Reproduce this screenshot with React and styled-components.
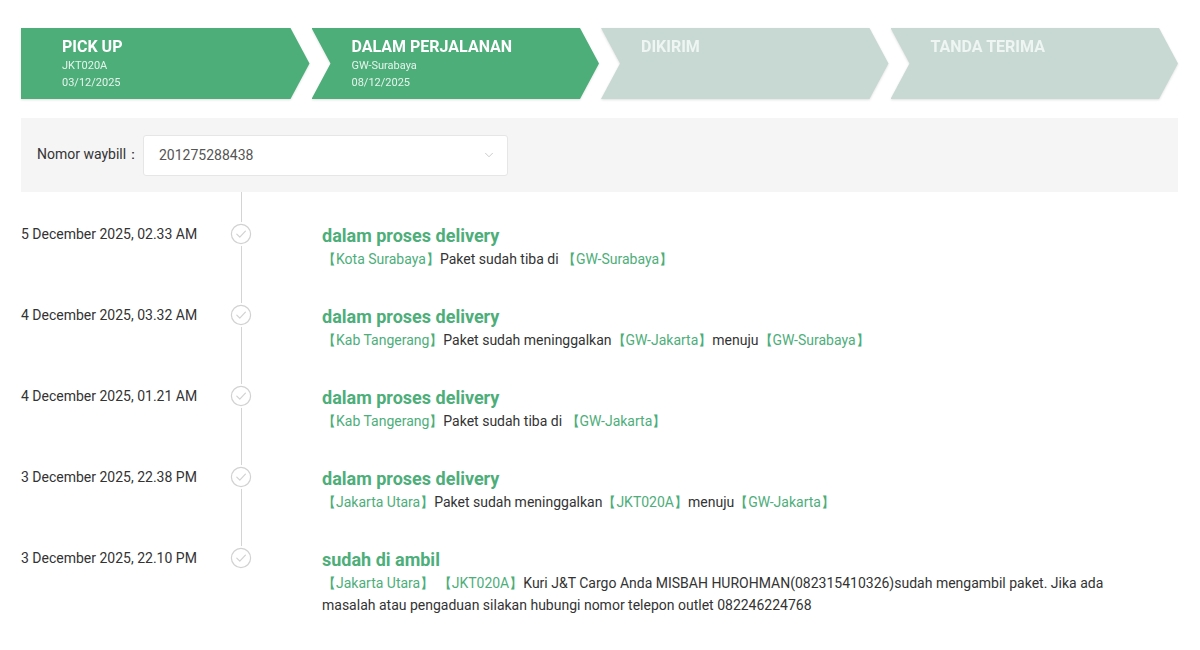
import React from 'react'
import styled, { createGlobalStyle } from 'styled-components'
import { ChevronDown } from 'lucide-react'

const GlobalStyle = createGlobalStyle`
  body {
    margin: 0;
    background: #fff;
    font-family: Roboto, "Liberation Sans", Arial, sans-serif;
    color: #333;
  }
`

const GREEN = '#4dae7a'

const steps = [
  { title: 'PICK UP', lines: ['JKT020A', '03/12/2025'], done: true },
  { title: 'DALAM PERJALANAN', lines: ['GW-Surabaya', '08/12/2025'], done: true },
  { title: 'DIKIRIM', lines: [], done: false },
  { title: 'TANDA TERIMA', lines: [], done: false },
]

const history = [
  {
    date: '5 December 2025, 02.33 AM',
    title: 'dalam proses delivery',
    desc: [['g', '【Kota Surabaya】'], ['t', 'Paket sudah tiba di '], ['g', '【GW-Surabaya】']],
  },
  {
    date: '4 December 2025, 03.32 AM',
    title: 'dalam proses delivery',
    desc: [['g', '【Kab Tangerang】'], ['t', 'Paket sudah meninggalkan'], ['g', '【GW-Jakarta】'], ['t', 'menuju'], ['g', '【GW-Surabaya】']],
  },
  {
    date: '4 December 2025, 01.21 AM',
    title: 'dalam proses delivery',
    desc: [['g', '【Kab Tangerang】'], ['t', 'Paket sudah tiba di '], ['g', '【GW-Jakarta】']],
  },
  {
    date: '3 December 2025, 22.38 PM',
    title: 'dalam proses delivery',
    desc: [['g', '【Jakarta Utara】'], ['t', 'Paket sudah meninggalkan'], ['g', '【JKT020A】'], ['t', 'menuju'], ['g', '【GW-Jakarta】']],
  },
  {
    date: '3 December 2025, 22.10 PM',
    title: 'sudah di ambil',
    desc: [
      ['g', '【Jakarta Utara】'],
      ['t', ' '],
      ['g', '【JKT020A】'],
      ['t', 'Kuri J&T Cargo Anda MISBAH HUROHMAN(082315410326)sudah mengambil paket. Jika ada masalah atau pengaduan silakan hubungi nomor telepon outlet 082246224768'],
    ],
  },
]

const Page = styled.div`
  padding: 28px 22px 30px 21px;
`

const Steps = styled.div`
  display: flex;
  gap: 2px;
  height: 71px;
  filter: drop-shadow(0 1px 1px rgba(0, 0, 0, 0.12));
`

const Step = styled.div`
  flex: 1;
  padding: 10px 0 0 ${p => (p.$first ? 41 : 40)}px;
  background: ${p => (p.$done ? GREEN : '#c8d9d3')};
  color: ${p => (p.$done ? '#fff' : '#eef5f2')};
  clip-path: ${p =>
    p.$first
      ? 'polygon(0 0, calc(100% - 19px) 0, 100% 50%, calc(100% - 19px) 100%, 0 100%)'
      : 'polygon(0 0, calc(100% - 19px) 0, 100% 50%, calc(100% - 19px) 100%, 0 100%, 19px 50%)'};
`

const StepTitle = styled.div`
  font-size: 16px;
  font-weight: 700;
  line-height: 18px;
  margin-bottom: 1px;
`

const StepLine = styled.div`
  font-size: 11px;
  line-height: 17px;
  color: #e6f4ec;
`

const Filter = styled.div`
  margin-top: 19px;
  height: 74px;
  background: #f5f5f5;
  display: flex;
  align-items: center;
  padding-left: 16px;
`

const Label = styled.span`
  font-size: 14px;
  color: #333;
  width: 106px;
`

const Select = styled.div`
  width: 365px;
  height: 41px;
  box-sizing: border-box;
  background: #fff;
  border: 1px solid #e6e6e6;
  border-radius: 3px;
  display: flex;
  align-items: center;
  justify-content: space-between;
  padding: 0 11px 0 15px;
  font-size: 14px;
  color: #555;
`

const Timeline = styled.div`
  display: flex;
  flex-direction: column;
`

const Row = styled.div`
  display: grid;
  grid-template-columns: 200px 40px 1fr;
  padding: 32px 0 3px;
  min-height: 46px;
`

const Date = styled.div`
  font-size: 14px;
  line-height: 20px;
  color: #333;
`

const Axis = styled.div`
  position: relative;
  display: flex;
  justify-content: center;

  &::before {
    content: '';
    position: absolute;
    left: 50%;
    top: -32px;
    bottom: ${p => (p.$last ? 'auto' : '-3px')};
    height: ${p => (p.$last ? '42px' : 'auto')};
    width: 1px;
    background: #d4d4d4;
  }
`

const Dot = styled.span`
  position: relative;
  width: 24px;
  height: 24px;
  margin-top: -2px;
  border-radius: 50%;
  background: #fff;
  display: flex;
  align-items: center;
  justify-content: center;
`

const Content = styled.div`
  padding-left: 61px;
  max-width: 830px;
`

const Title = styled.div`
  font-size: 18px;
  font-weight: 700;
  line-height: 24px;
  color: ${GREEN};
`

const Desc = styled.div`
  font-size: 14px;
  line-height: 22px;
  color: #333;
`

const Place = styled.span`
  color: ${GREEN};
`

const CheckCircle = () => (
  <svg width="22" height="22" viewBox="0 0 22 22" fill="none" stroke="#d2d2d2" strokeWidth="1.2" strokeLinecap="round" strokeLinejoin="round">
    <circle cx="11" cy="11" r="9.6" />
    <path d="M6.8 11.2l3 3 5.6-6" />
  </svg>
)

export default function App() {
  return (
    <>
      <GlobalStyle />
      <Page>
        <Steps>
          {steps.map((s, i) => (
            <Step key={s.title} $first={i === 0} $done={s.done}>
              <StepTitle>{s.title}</StepTitle>
              {s.lines.map(l => (
                <StepLine key={l}>{l}</StepLine>
              ))}
            </Step>
          ))}
        </Steps>

        <Filter>
          <Label>Nomor waybill：</Label>
          <Select>
            201275288438
            <ChevronDown size={14} color="#c4c4c4" strokeWidth={1.5} />
          </Select>
        </Filter>

        <Timeline>
          {history.map((h, i) => (
            <Row key={i}>
              <Date>{h.date}</Date>
              <Axis $last={i === history.length - 1}>
                <Dot>
                  <CheckCircle />
                </Dot>
              </Axis>
              <Content>
                <Title>{h.title}</Title>
                <Desc>
                  {h.desc.map(([k, t], j) =>
                    k === 'g' ? <Place key={j}>{t}</Place> : <span key={j}>{t}</span>
                  )}
                </Desc>
              </Content>
            </Row>
          ))}
        </Timeline>
      </Page>
    </>
  )
}
